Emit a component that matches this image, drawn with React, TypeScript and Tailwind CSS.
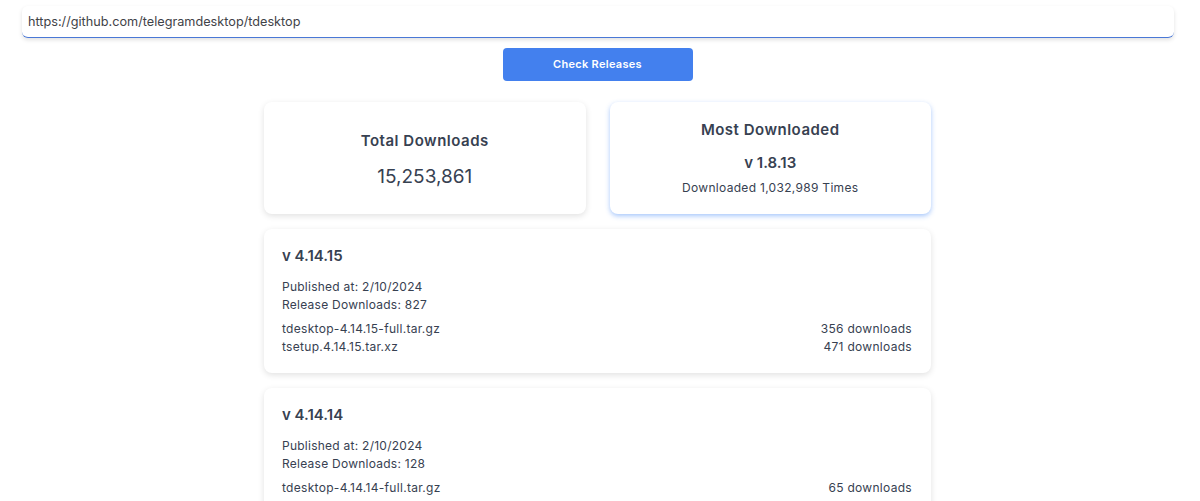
import React from 'react';

type Asset = { name: string; downloads: number };
type Release = { tag: string; published: string; total: number; assets: Asset[] };

const releases: Release[] = [
  {
    tag: '4.14.15',
    published: '2/10/2024',
    total: 827,
    assets: [
      { name: 'tdesktop-4.14.15-full.tar.gz', downloads: 356 },
      { name: 'tsetup.4.14.15.tar.xz', downloads: 471 },
    ],
  },
  {
    tag: '4.14.14',
    published: '2/10/2024',
    total: 128,
    assets: [
      { name: 'tdesktop-4.14.14-full.tar.gz', downloads: 65 },
      { name: 'tsetup.4.14.14.tar.xz', downloads: 63 },
    ],
  },
];

export default function App() {
  return (
    <div className="min-h-screen bg-white text-[#374151]" style={{ fontFamily: 'Inter, "Noto Sans", sans-serif' }}>
      <div className="pt-[6px] pl-[22px] pr-[26px]">
        <input
          type="text"
          defaultValue="https://github.com/telegramdesktop/tdesktop"
          className="w-full h-[32px] rounded-md bg-white px-[6px] text-[12.7px] text-[#3f4348] shadow-[0_2px_4px_rgba(0,0,0,0.12)] border-b-[1.5px] border-[#4a78d6] focus:outline-none"
        />
      </div>

      <main className="flex flex-col pr-[5px] pt-[10px]">
        <button className="mx-auto w-[190px] h-[33px] rounded-[4px] bg-[#4380ee] text-white text-[11px] font-semibold tracking-[0.3px]">
          Check Releases
        </button>

        <div className="mx-auto w-[667px] mt-[21px] flex flex-col gap-[15px]">
          {/* Summary */}
          <div className="grid grid-cols-2 gap-[24px]">
            <div className="h-[112px] rounded-lg bg-white shadow-[0_2px_6px_rgba(0,0,0,0.12)] flex flex-col items-center justify-center">
              <h2 className="text-[15px] font-semibold leading-[20px] tracking-[0.5px] mt-[3px]">Total Downloads</h2>
              <p className="text-[19px] leading-[24px] mt-[14px]">15,253,861</p>
            </div>
            <div className="h-[112px] rounded-lg bg-white shadow-[0_2px_5px_rgba(59,130,246,0.45)] flex flex-col items-center justify-center">
              <h2 className="text-[15px] font-semibold leading-[20px] tracking-[0.5px]">Most Downloaded</h2>
              <p className="text-[15px] font-semibold leading-[20px] mt-[13px]">v 1.8.13</p>
              <p className="text-[12px] leading-[16px] mt-[7px] tracking-[0.3px]">Downloaded 1,032,989 Times</p>
            </div>
          </div>

          {releases.map(r => (
            <div
              key={r.tag}
              className="rounded-lg bg-white shadow-[0_2px_6px_rgba(0,0,0,0.12)] pl-[18px] pr-[19px] pt-[17px] pb-[17px]"
            >
              <h3 className="text-[15px] font-semibold leading-[20px]">v {r.tag}</h3>
              <div className="mt-[12px] text-[12px] leading-[18px] tracking-[0.25px]">
                <p>Published at: {r.published}</p>
                <p>Release Downloads: {r.total}</p>
              </div>
              <div className="mt-[6px] text-[12px] leading-[18px] tracking-[0.3px]">
                {r.assets.map(a => (
                  <div key={a.name} className="flex justify-between">
                    <span>{a.name}</span>
                    <span>{a.downloads} downloads</span>
                  </div>
                ))}
              </div>
            </div>
          ))}
        </div>
      </main>
    </div>
  );
}
